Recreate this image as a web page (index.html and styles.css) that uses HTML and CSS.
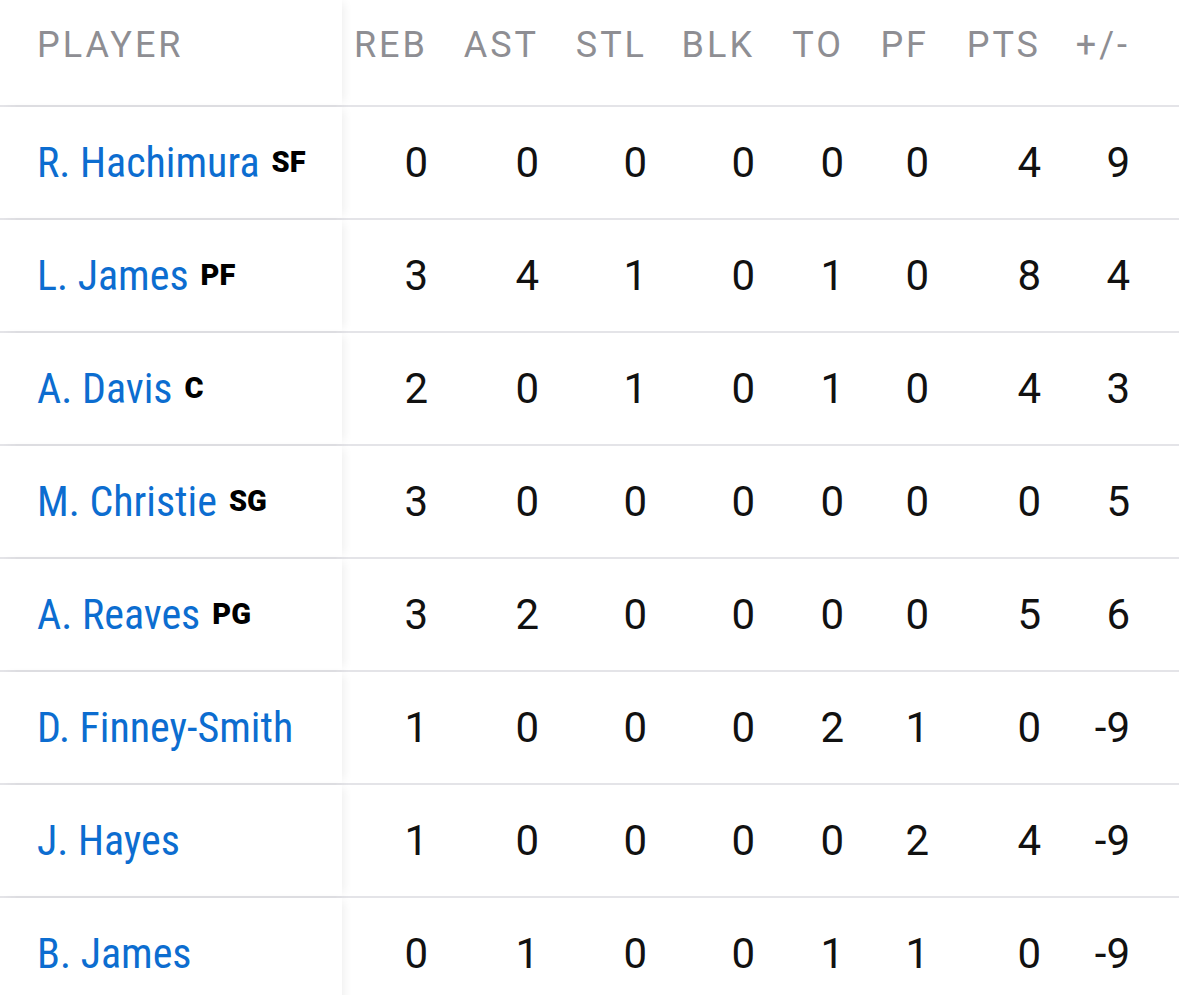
FILE: index.html
```html
<!DOCTYPE html>
<html>
<head>
<meta charset="utf-8">
<link rel="stylesheet" href="styles.css">
</head>
<body>
<div class="box">
  <div class="row head">
    <div class="cell player">PLAYER</div>
    <div class="cell stat">REB</div>
    <div class="cell stat">AST</div>
    <div class="cell stat">STL</div>
    <div class="cell stat">BLK</div>
    <div class="cell stat">TO</div>
    <div class="cell stat">PF</div>
    <div class="cell stat">PTS</div>
    <div class="cell stat">+/-</div>
  </div>
  <div class="row">
    <div class="cell player"><div class="pl"><span class="name">R. Hachimura</span><span class="pos">SF</span></div></div>
    <div class="cell stat">0</div><div class="cell stat">0</div><div class="cell stat">0</div><div class="cell stat">0</div><div class="cell stat">0</div><div class="cell stat">0</div><div class="cell stat">4</div><div class="cell stat">9</div>
  </div>
  <div class="row">
    <div class="cell player"><div class="pl"><span class="name">L. James</span><span class="pos">PF</span></div></div>
    <div class="cell stat">3</div><div class="cell stat">4</div><div class="cell stat">1</div><div class="cell stat">0</div><div class="cell stat">1</div><div class="cell stat">0</div><div class="cell stat">8</div><div class="cell stat">4</div>
  </div>
  <div class="row">
    <div class="cell player"><div class="pl"><span class="name">A. Davis</span><span class="pos">C</span></div></div>
    <div class="cell stat">2</div><div class="cell stat">0</div><div class="cell stat">1</div><div class="cell stat">0</div><div class="cell stat">1</div><div class="cell stat">0</div><div class="cell stat">4</div><div class="cell stat">3</div>
  </div>
  <div class="row">
    <div class="cell player"><div class="pl"><span class="name">M. Christie</span><span class="pos">SG</span></div></div>
    <div class="cell stat">3</div><div class="cell stat">0</div><div class="cell stat">0</div><div class="cell stat">0</div><div class="cell stat">0</div><div class="cell stat">0</div><div class="cell stat">0</div><div class="cell stat">5</div>
  </div>
  <div class="row">
    <div class="cell player"><div class="pl"><span class="name">A. Reaves</span><span class="pos">PG</span></div></div>
    <div class="cell stat">3</div><div class="cell stat">2</div><div class="cell stat">0</div><div class="cell stat">0</div><div class="cell stat">0</div><div class="cell stat">0</div><div class="cell stat">5</div><div class="cell stat">6</div>
  </div>
  <div class="row">
    <div class="cell player"><div class="pl"><span class="name">D. Finney-Smith</span></div></div>
    <div class="cell stat">1</div><div class="cell stat">0</div><div class="cell stat">0</div><div class="cell stat">0</div><div class="cell stat">2</div><div class="cell stat">1</div><div class="cell stat">0</div><div class="cell stat">-9</div>
  </div>
  <div class="row">
    <div class="cell player"><div class="pl"><span class="name">J. Hayes</span></div></div>
    <div class="cell stat">1</div><div class="cell stat">0</div><div class="cell stat">0</div><div class="cell stat">0</div><div class="cell stat">0</div><div class="cell stat">2</div><div class="cell stat">4</div><div class="cell stat">-9</div>
  </div>
  <div class="row">
    <div class="cell player"><div class="pl"><span class="name">B. James</span></div></div>
    <div class="cell stat">0</div><div class="cell stat">1</div><div class="cell stat">0</div><div class="cell stat">0</div><div class="cell stat">1</div><div class="cell stat">1</div><div class="cell stat">0</div><div class="cell stat">-9</div>
  </div>
</div>
</body>
</html>
```

FILE: styles.css
```css
html, body {
  margin: 0;
  padding: 0;
  background: #ffffff;
}
body {
  font-family: Roboto, "Liberation Sans", sans-serif;
  overflow: hidden;
}
.box {
  width: 1179px;
}
.row {
  display: grid;
  grid-template-columns: 342px 84px 111px 108px 108px 89px 85px 112px 89px 1fr;
  height: 111px;
  border-bottom: 2px solid #e4e4e8;
  align-items: center;
}
.row.head {
  height: 105px;
  align-items: start;
}
.cell {
  white-space: nowrap;
}
.player {
  height: 100%;
  display: flex;
  align-items: center;
  padding-left: 37px;
  box-sizing: border-box;
  background: #ffffff;
  position: relative;
  z-index: 1;
  box-shadow: 5px 0 9px -3px rgba(0, 0, 0, 0.07);
}
.head .cell {
  font-size: 36px;
  line-height: 42px;
  letter-spacing: 3px;
  color: #8e8e93;
  padding-top: 24px;
}
.head .player {
  align-items: flex-start;
}
.head .stat {
  margin-right: -2px;
}
.stat {
  text-align: right;
  font-size: 42px;
  color: #111111;
  margin-right: -2px;
}
.pl {
  white-space: nowrap;
}
.name {
  font-family: "Roboto Condensed", "Liberation Sans Narrow", Roboto, sans-serif;
  font-size: 42px;
  color: #0c6dd0;
}
.pos {
  font-family: Roboto, sans-serif;
  font-weight: 900;
  font-size: 29px;
  color: #000000;
  margin-left: 12px;
  vertical-align: 5px;
}
```
